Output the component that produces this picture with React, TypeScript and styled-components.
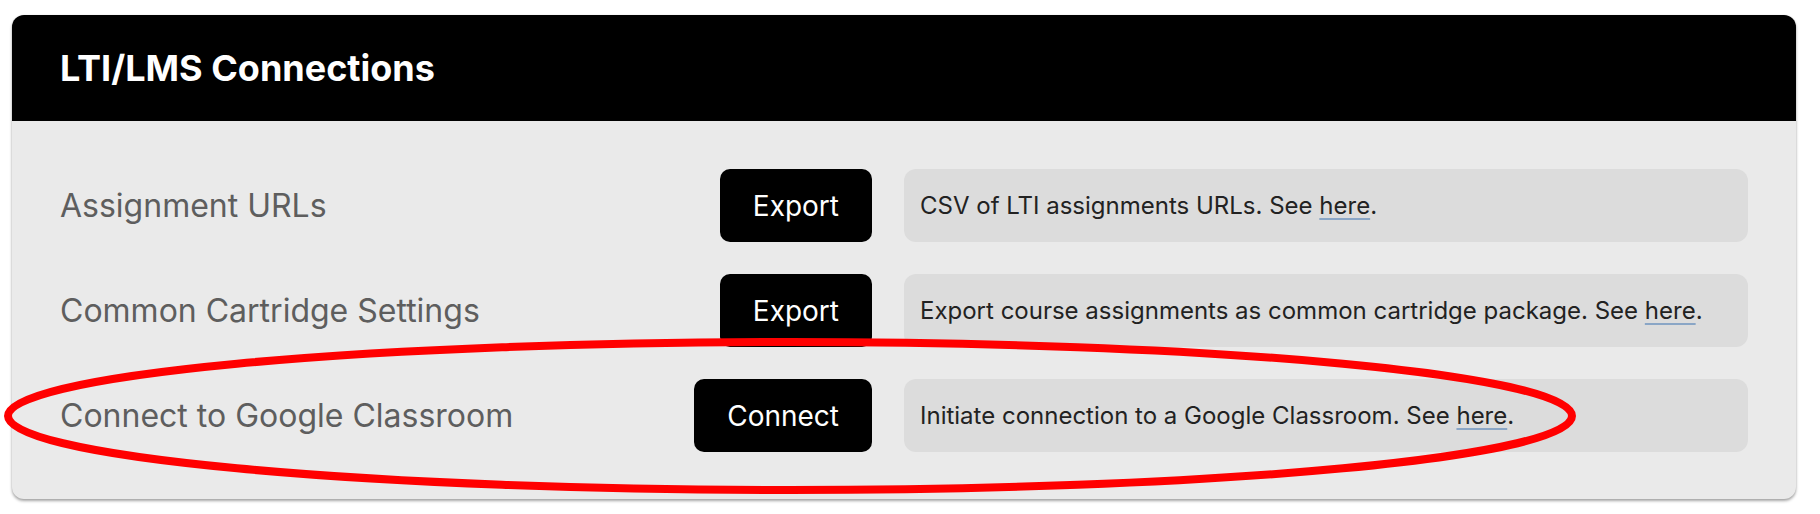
import React from "react";
import styled, { createGlobalStyle } from "styled-components";

const GlobalStyle = createGlobalStyle`
  html, body {
    margin: 0;
    padding: 0;
    background: #ffffff;
  }
  body {
    font-family: Inter, "Noto Sans", "Liberation Sans", sans-serif;
  }
`;

const Page = styled.div`
  position: relative;
  width: 1820px;
  height: 514px;
  padding: 15px 24px 0 12px;
  box-sizing: border-box;
`;

const Card = styled.section`
  background: #eaeaea;
  border-radius: 12px;
  overflow: hidden;
  box-shadow: 0 2px 3px rgba(0, 0, 0, 0.35), 0 0 2px rgba(0, 0, 0, 0.08);
`;

const Header = styled.header`
  background: #000000;
  padding: 32px 48px;
  height: 106px;
  box-sizing: border-box;
  display: flex;
  align-items: center;
`;

const Title = styled.h2`
  margin: 0;
  color: #ffffff;
  font-family: Inter, "Liberation Sans", sans-serif;
  font-weight: 700;
  font-size: 36px;
  line-height: 42px;
  letter-spacing: 0;
`;

const Body = styled.div`
  padding: 48px 48px 47px 48px;
  display: flex;
  flex-direction: column;
  gap: 32px;
`;

const Row = styled.div`
  display: grid;
  grid-template-columns: 1fr 1fr;
  align-items: center;
  height: 73px;
`;

const Left = styled.div`
  display: flex;
  align-items: center;
  justify-content: space-between;
  padding-right: 32px;
`;

const Label = styled.span`
  font-family: Inter, "Liberation Sans", sans-serif;
  font-size: 32px;
  color: #5e5e5e;
  font-weight: 400;
`;

const ActionButton = styled.button`
  height: 73px;
  padding: 0 33px;
  background: #000000;
  color: #ffffff;
  border: none;
  border-radius: 10px;
  font-family: Inter, "Liberation Sans", sans-serif;
  font-size: 28px;
  font-weight: 400;
  cursor: pointer;
`;

const Description = styled.div`
  height: 73px;
  box-sizing: border-box;
  background: #dcdcdc;
  border-radius: 12px;
  padding: 0 16px;
  display: flex;
  align-items: center;
  font-family: Inter, "Liberation Sans", sans-serif;
  font-size: 24px;
  color: #222222;
`;

const Link = styled.a`
  color: #222222;
  text-decoration: underline;
  text-decoration-color: #8aa6c6;
  text-decoration-thickness: 2px;
  text-underline-offset: 4px;
`;

const Annotation = styled.svg`
  position: absolute;
  left: 0;
  top: 0;
  pointer-events: none;
`;

const rows = [
  {
    label: "Assignment URLs",
    action: "Export",
    text: "CSV of LTI assignments URLs. See ",
  },
  {
    label: "Common Cartridge Settings",
    action: "Export",
    text: "Export course assignments as common cartridge package. See ",
  },
  {
    label: "Connect to Google Classroom",
    action: "Connect",
    text: "Initiate connection to a Google Classroom. See ",
  },
];

export default function App() {
  return (
    <>
      <GlobalStyle />
      <Page>
        <Card>
          <Header>
            <Title>LTI/LMS Connections</Title>
          </Header>
          <Body>
            {rows.map((r) => (
              <Row key={r.label}>
                <Left>
                  <Label>{r.label}</Label>
                  <ActionButton>{r.action}</ActionButton>
                </Left>
                <Description>
                  <span>
                    {r.text}
                    <Link href="#">here</Link>.
                  </span>
                </Description>
              </Row>
            ))}
          </Body>
        </Card>
        <Annotation width="1820" height="514" viewBox="0 0 1820 514">
          <ellipse
            cx="790"
            cy="416"
            rx="782"
            ry="74"
            fill="none"
            stroke="#ff0000"
            strokeWidth="8"
          />
        </Annotation>
      </Page>
    </>
  );
}
